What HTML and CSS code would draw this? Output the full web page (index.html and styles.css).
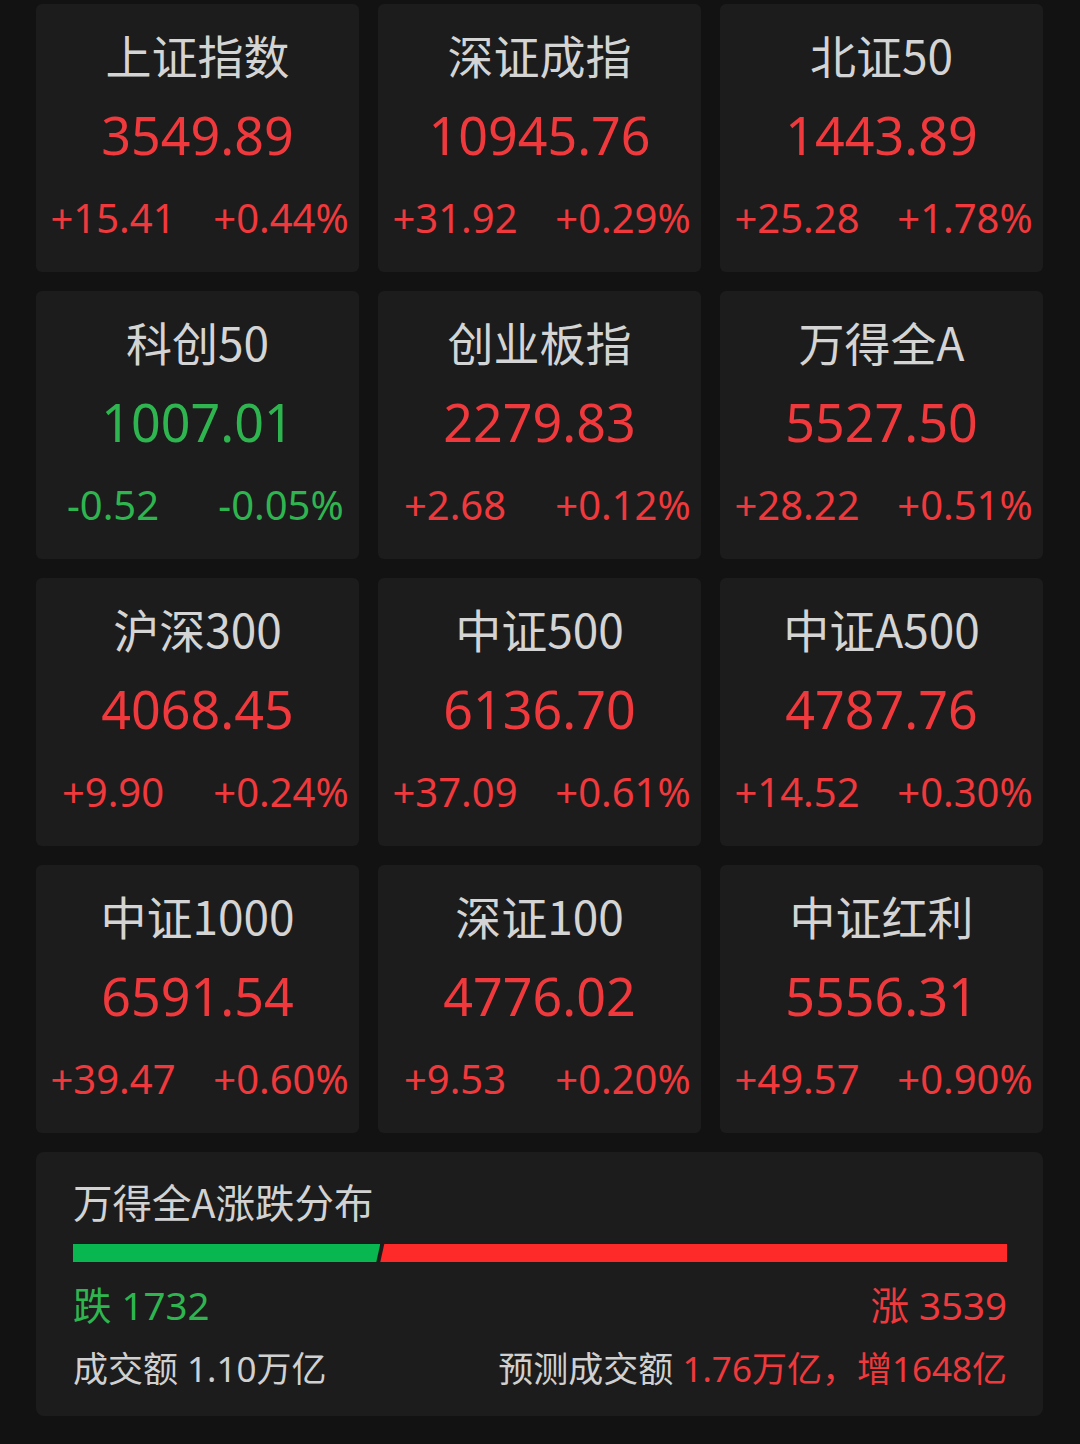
FILE: index.html
```html
<!DOCTYPE html>
<html lang="zh-CN">
<head>
<meta charset="utf-8">
<title>指数行情</title>
<link rel="stylesheet" href="styles.css">
</head>
<body>
<main class="page">
  <section class="grid">
    <div class="card"><div class="name">上证指数</div><div class="price up">3549.89</div><div class="chg up"><span>+15.41</span><span>+0.44%</span></div></div>
    <div class="card"><div class="name">深证成指</div><div class="price up">10945.76</div><div class="chg up"><span>+31.92</span><span>+0.29%</span></div></div>
    <div class="card"><div class="name">北证50</div><div class="price up">1443.89</div><div class="chg up"><span>+25.28</span><span>+1.78%</span></div></div>

    <div class="card"><div class="name">科创50</div><div class="price down">1007.01</div><div class="chg down"><span>-0.52</span><span>-0.05%</span></div></div>
    <div class="card"><div class="name">创业板指</div><div class="price up">2279.83</div><div class="chg up"><span>+2.68</span><span>+0.12%</span></div></div>
    <div class="card"><div class="name">万得全A</div><div class="price up">5527.50</div><div class="chg up"><span>+28.22</span><span>+0.51%</span></div></div>

    <div class="card"><div class="name">沪深300</div><div class="price up">4068.45</div><div class="chg up"><span>+9.90</span><span>+0.24%</span></div></div>
    <div class="card"><div class="name">中证500</div><div class="price up">6136.70</div><div class="chg up"><span>+37.09</span><span>+0.61%</span></div></div>
    <div class="card"><div class="name">中证A500</div><div class="price up">4787.76</div><div class="chg up"><span>+14.52</span><span>+0.30%</span></div></div>

    <div class="card"><div class="name">中证1000</div><div class="price up">6591.54</div><div class="chg up"><span>+39.47</span><span>+0.60%</span></div></div>
    <div class="card"><div class="name">深证100</div><div class="price up">4776.02</div><div class="chg up"><span>+9.53</span><span>+0.20%</span></div></div>
    <div class="card"><div class="name">中证红利</div><div class="price up">5556.31</div><div class="chg up"><span>+49.57</span><span>+0.90%</span></div></div>
  </section>

  <section class="dist">
    <div class="dist-title">万得全A涨跌分布</div>
    <div class="bar">
      <div class="bar-fall" style="width:32.9%"></div>
      <div class="bar-rise"></div>
    </div>
    <div class="counts">
      <span class="down">跌 1732</span>
      <span class="up">涨 3539</span>
    </div>
    <div class="amount">
      <span>成交额 1.10万亿</span>
      <span>预测成交额 <em class="up">1.76万亿，增1648亿</em></span>
    </div>
  </section>
</main>
</body>
</html>
```

FILE: styles.css
```css
* { box-sizing: border-box; margin: 0; padding: 0; }

html, body {
  background: #121212;
  width: 1080px;
  height: 1444px;
  overflow: hidden;
}

body {
  font-family: "Noto Sans", "Noto Sans CJK SC", sans-serif;
  color: #d2d2d2;
}

.page {
  padding: 4px 37px 0 36px;
}

.grid {
  display: grid;
  grid-template-columns: repeat(3, 323px);
  grid-auto-rows: 268px;
  column-gap: 19px;
  row-gap: 19px;
}

.card {
  background: #1c1c1c;
  border-radius: 6px;
  display: flex;
  flex-direction: column;
  align-items: stretch;
  text-align: center;
}

.name {
  margin-top: 20px;
  height: 60px;
  line-height: 60px;
  font-size: 46px;
  color: #d4d4d4;
  font-family: "Noto Sans CJK SC", "Noto Sans", sans-serif;
}

.price {
  margin-top: 16px;
  height: 70px;
  line-height: 70px;
  font-size: 52px;
}

.chg {
  margin-top: 23px;
  height: 50px;
  line-height: 50px;
  font-size: 40px;
  display: grid;
  grid-template-columns: 154px 154px;
  column-gap: 14px;
  white-space: nowrap;
}

.up { color: #f0393c; }
.down { color: #2fb54f; }

.dist {
  margin-top: 19px;
  width: 1007px;
  height: 264px;
  background: #1c1c1c;
  border-radius: 8px;
  padding: 23px 36px 0 37px;
}

.dist-title {
  height: 52px;
  line-height: 52px;
  font-size: 39.5px;
  color: #d2d2d2;
  font-family: "Noto Sans CJK SC", "Noto Sans", sans-serif;
}

.bar {
  margin-top: 17px;
  height: 18px;
  display: flex;
}

.bar-fall {
  background: #08b74f;
  clip-path: polygon(0 0, 100% 0, calc(100% - 4px) 100%, 0 100%);
}

.bar-rise {
  flex: 1;
  background: #fe2a2a;
  clip-path: polygon(4px 0, 100% 0, 100% 100%, 0 100%);
}

.counts {
  margin-top: 18px;
  height: 50px;
  line-height: 50px;
  font-size: 38.5px;
  display: flex;
  justify-content: space-between;
}

.amount {
  margin-top: 16px;
  height: 46px;
  line-height: 46px;
  font-size: 35px;
  display: flex;
  justify-content: space-between;
  color: #d0d0d0;
}

.amount em { font-style: normal; }
```
